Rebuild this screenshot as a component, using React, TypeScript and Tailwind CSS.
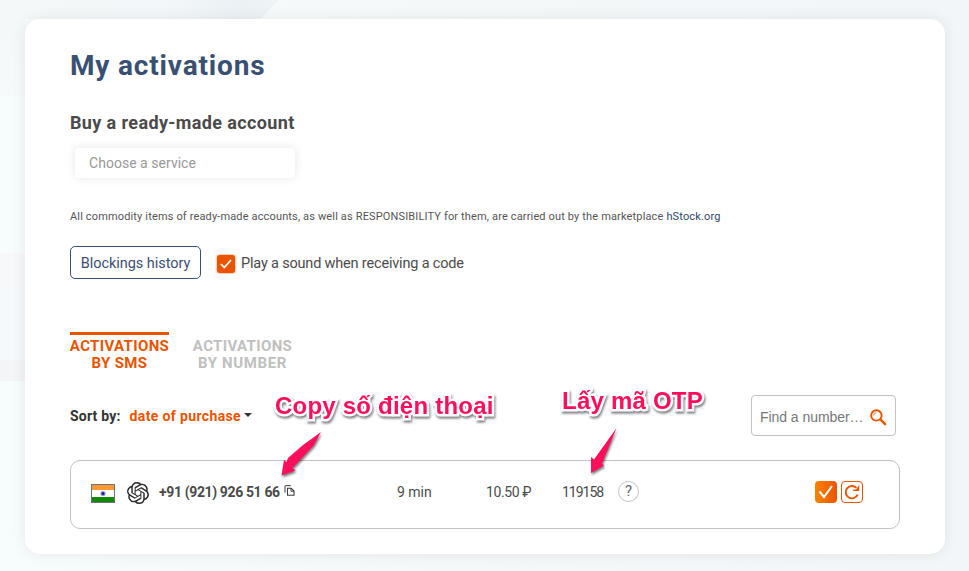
import { SiOpenai } from "react-icons/si";

function Flag() {
  return (
    <svg width="24" height="19" viewBox="0 0 24 19" className="shrink-0">
      <rect width="24" height="19" fill="#6f7377" />
      <rect x="1" y="1" width="22" height="5" fill="#ff9933" />
      <rect x="1" y="6" width="22" height="7" fill="#fff" />
      <rect x="1" y="13" width="22" height="5" fill="#128807" />
      <circle cx="12" cy="9.5" r="2.6" fill="#9a9ad6" />
      <circle cx="12" cy="9.5" r="1.5" fill="#1c1c9c" />
    </svg>
  );
}

function CopyIcon() {
  return (
    <svg width="11" height="12" viewBox="0 0 11 12" fill="none" stroke="#3c3c3c" className="shrink-0">
      <path d="M1 7.5V1.2C1 .8 1.2.6 1.6.6H6.8" strokeWidth="1" />
      <path d="M3.5 3.2H7.2L10 6V10.2H3.5Z" strokeWidth="1.1" />
      <path d="M7 3.2V6.2H10" strokeWidth="1" />
    </svg>
  );
}

function SearchIcon() {
  return (
    <svg width="17" height="17" viewBox="0 0 17 17" fill="none" stroke="#ea5400" className="shrink-0">
      <circle cx="6.4" cy="6.4" r="5.2" strokeWidth="1.9" />
      <path d="M3.6 6.4A2.9 2.9 0 0 1 6.4 3.6" strokeWidth="0.8" />
      <path d="M10.4 10.4L15.8 15.8" strokeWidth="2.4" />
    </svg>
  );
}

function Arrow({ className, points, box }: { className: string; points: string; box: [number, number] }) {
  return (
    <svg width={box[0]} height={box[1]} viewBox={`0 0 ${box[0]} ${box[1]}`} className={className}>
      <polygon points={points} fill="#ff0f5b" />
    </svg>
  );
}

function Backdrop() {
  return (
    <svg width="969" height="571" className="absolute inset-0">
      <defs>
        <linearGradient id="top" x1="0" x2="1">
          <stop offset="0" stopColor="#f5f8f9" />
          <stop offset="0.6" stopColor="#f3f7f9" />
          <stop offset="0.85" stopColor="#ebf1f4" />
          <stop offset="1" stopColor="#eff4f6" />
        </linearGradient>
        <linearGradient id="left" x1="0" x2="0" y1="0" y2="1">
          <stop offset="0" stopColor="#f5f8f9" />
          <stop offset="1" stopColor="#f7fafb" />
        </linearGradient>
      </defs>
      <rect y="19" width="25" height="77" fill="url(#left)" />
      <polygon points="0,0 279,0 260,19 0,19" fill="url(#top)" />
      <rect y="253" width="25" height="30" fill="#f7f8fa" />
      <rect y="283" width="25" height="77" fill="#f6f9fb" />
      <rect y="360" width="25" height="21" fill="#f3f5f7" />
    </svg>
  );
}

const note =
  "absolute whitespace-nowrap font-['Liberation_Sans',sans-serif] text-[24px] leading-[28px] font-bold tracking-[0.22px] text-[#ff0f5b] [-webkit-text-stroke:5px_white] [paint-order:stroke_fill] [filter:drop-shadow(1px_2px_1px_rgba(0,0,0,0.5))]";

export default function App() {
  return (
    <div className="relative h-[571px] w-[969px] overflow-hidden bg-[linear-gradient(90deg,#f7fcfd_0%,#f4f8f9_50%,#f2f6f9_100%)] px-[25px] pt-[19px] font-[Roboto,'Open_Sans',sans-serif] text-[#4b4b4b]">
      <Backdrop />
      <main className="relative h-[535px] w-[920px] rounded-[15px] bg-white pr-[45px] pl-[45px] shadow-[0_0_15px_rgba(0,0,0,0.08)]">
        <h1 className="pt-[30px] text-[28px] leading-[34px] font-bold tracking-[0.83px] text-[#3a5073]">My activations</h1>
        <h2 className="mt-[29px] text-[18px] leading-[22px] font-bold tracking-[0.38px] text-[#4a4a4a]">Buy a ready-made account</h2>
        <div className="mt-[14px] ml-[5px] flex h-[30px] w-[220px] items-center rounded-[4px] bg-white pl-[14px] text-[14px] tracking-[0.03px] text-[#999] shadow-[0_0_10px_rgba(0,0,0,0.1)]">
          Choose a service
        </div>
        <p className="mt-[31px] text-[11px] leading-[16px] tracking-[0.148px] whitespace-nowrap text-[#555]">
          All commodity items of ready-made accounts, as well as RESPONSIBILITY for them, are carried out by the marketplace{" "}
          <a className="text-[#304868]">hStock.org</a>
        </p>
        <div className="mt-[21px] flex h-[33px] items-center">
          <button className="h-[33px] w-[131px] rounded-[5px] border border-[#3a5073] pt-[2px] text-[14.5px] tracking-[-0.05px] whitespace-nowrap text-[#3a5073]">Blockings history</button>
          <span className="mt-[3px] ml-[16px] flex size-[18px] items-center justify-center rounded-[3px] bg-[#ea5400] shadow-[0_0_2px_#ea5400]">
            <svg width="12" height="10" viewBox="0 0 12 10" fill="none" stroke="white" strokeWidth="1.8">
              <path d="M1 5L4.3 8.5L11 1" />
            </svg>
          </span>
          <span className="mt-[2px] ml-[6px] text-[14.5px] tracking-[-0.18px] whitespace-nowrap">Play a sound when receiving a code</span>
        </div>
        <nav className="mt-[53px] flex gap-[24px] text-center text-[15px] leading-[17px] font-bold tracking-[0.35px]">
          <div className="flex w-[99px] flex-col items-center border-t-[3px] border-[#ea5400] pt-[3px] whitespace-nowrap text-[#ea5400]">
            <span>ACTIVATIONS</span>
            <span>BY SMS</span>
          </div>
          <div className="flex w-[99px] flex-col items-center pt-[6px] whitespace-nowrap text-[#c0c0c0]">
            <span>ACTIVATIONS</span>
            <span className="tracking-[0.6px]">BY NUMBER</span>
          </div>
        </nav>
        <div className="mt-[23px] flex h-[41px] items-center text-[14px] font-bold">
          <span className="mt-[2px] tracking-[0.2px] text-[#333]">Sort by:</span>
          <span className="mt-[2px] ml-[9px] tracking-[0.36px] whitespace-nowrap text-[#ea5400]">date of purchase</span>
          <span className="mb-[2px] ml-[3px] border-x-[4px] border-t-[4px] border-x-transparent border-t-[#333]" />
          <div className="mr-[4px] ml-auto flex h-[41px] w-[145px] items-center rounded-[4px] border border-[#c2c2c2] pr-[8px] pl-[8px] font-['Liberation_Sans',sans-serif] text-[14px] font-normal text-[#777]">
            <span className="mt-[3px] tracking-[-0.05px] whitespace-nowrap">Find a number…</span>
            <span className="mt-[3px] ml-auto"><SearchIcon /></span>
          </div>
        </div>
        <section className="mt-[24px] flex h-[69px] w-[830px] items-center rounded-[10px] border border-[#c2c2c2] pb-[6px] pl-[20px] text-[14px]">
          <span className="mt-[3px] flex"><Flag /></span>
          <SiOpenai size={22} color="#282828" className="mt-[2px] ml-[12px] shrink-0" />
          <span className="mt-[2px] ml-[10px] w-[122px] font-bold tracking-[-0.37px] whitespace-nowrap">+91 (921) 926 51 66</span>
          <span className="mb-[1px] ml-[3px]"><CopyIcon /></span>
          <span className="mt-[2px] ml-[102px] w-[89px] whitespace-nowrap">9 min</span>
          <span className="mt-[2px] w-[76px] tracking-[-0.4px] whitespace-nowrap">10.50 ₽</span>
          <span className="mt-[2px] w-[56px] tracking-[-1px] whitespace-nowrap">119158</span>
          <span className="flex size-[21px] items-center justify-center rounded-full border border-[#c2c2c2] text-[15px] text-[#666]">?</span>
          <span className="ml-[176px] flex size-[22px] items-center justify-center rounded-[4px] bg-linear-to-r from-[#f98200] to-[#ea5400]">
            <svg width="16" height="14" viewBox="0 0 16 14" fill="none" stroke="white" strokeWidth="2">
              <path d="M1.5 6.5L6 12L14 1" />
            </svg>
          </span>
          <span className="ml-[4px] flex size-[22px] items-center justify-center rounded-[4px] border border-[#ea5400]">
            <svg width="16" height="16" viewBox="0 0 16 16" fill="none" stroke="#ea5400" strokeWidth="1.9" className="shrink-0">
              <path d="M13.6 10.6A6.2 6.2 0 1 1 12.4 3.9" />
              <path d="M15.2 1V7H9.2V5.4H12Z" fill="#ea5400" stroke="none" />
            </svg>
          </span>
        </section>
      </main>
      <div className={note + " top-[392px] left-[275px]"}>Copy số điện thoại</div>
      <div className={note + " top-[387px] left-[562px]"}>Lấy mã OTP</div>
      <Arrow className="absolute top-[430px] left-[278px] [filter:drop-shadow(1px_2px_1px_rgba(0,0,0,0.5))]" box={[48, 50]} points="43,2 36,15 24,28 14.5,38 17.5,40.5 3.5,45.5 6,30 8.5,32 10,28 25,15" />
      <Arrow className="absolute top-[426px] left-[586px] [filter:drop-shadow(1px_2px_1px_rgba(0,0,0,0.5))]" box={[36, 52]} points="30.5,2 16,37.5 18,39.5 5,47 5,31 8,33.5" />
    </div>
  );
}
